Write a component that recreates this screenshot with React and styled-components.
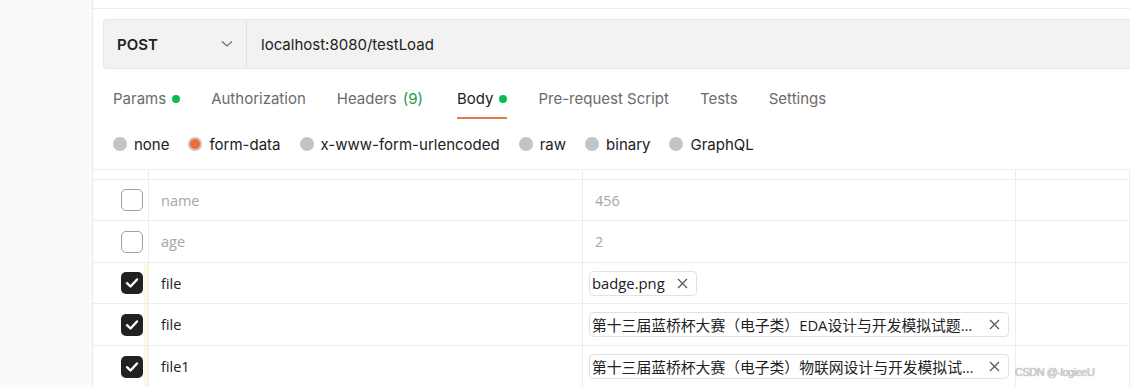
import React from "react";
import styled, { createGlobalStyle } from "styled-components";

const GlobalStyle = createGlobalStyle`
	html, body {
		margin: 0;
		padding: 0;
		background: #ffffff;
		overflow: hidden;
	}
	body {
		font-family: Inter, "Noto Sans CJK SC", sans-serif;
		color: #212121;
	}
`;

const Page = styled.div`
	display: flex;
	width: 1130px;
	height: 387px;
	overflow: hidden;
	position: relative;
`;

const Sidebar = styled.div`
	width: 92px;
	flex-shrink: 0;
	background: #fafafa;
	border-right: 1px solid #ebebeb;
`;

const Main = styled.div`
	flex: 1;
	display: flex;
	flex-direction: column;
	min-width: 0;
`;

const TopStrip = styled.div`
	height: 8px;
	flex-shrink: 0;
	border-bottom: 1px solid #ededed;
`;

const UrlBar = styled.div`
	display: flex;
	flex-shrink: 0;
	height: 48px;
	margin: 10px -40px 0 10px;
	background: #f2f2f2;
	border: 1px solid #e6e6e6;
	border-radius: 4px;
`;

const Method = styled.div`
	width: 143px;
	display: flex;
	align-items: center;
	justify-content: space-between;
	padding: 0 13px 0 13px;
	box-sizing: border-box;
	border-right: 1px solid #e2e2e2;
	font-weight: 600;
	font-size: 15px;
	color: #212121;
`;

const UrlText = styled.div`
	display: flex;
	align-items: center;
	padding-left: 14px;
	font-size: 15px;
	color: #212121;
`;

const Tabs = styled.div`
	display: flex;
	flex-shrink: 0;
	gap: 31px;
	height: 50px;
	padding-left: 20px;
	box-sizing: border-box;
`;

const Tab = styled.div`
	display: flex;
	align-items: center;
	gap: 6px;
	font-size: 15px;
	color: ${p => (p.active ? "#212121" : "#6b6b6b")};
	border-bottom: 2px solid ${p => (p.active ? "#e4774c" : "transparent")};
	padding-top: 10px;
	margin-left: ${p => (p.active ? "3px" : "0")};
	box-sizing: border-box;
`;

const Count = styled.span`
	color: #1a9a4f;
`;

const Dot = styled.span`
	width: 8px;
	height: 8px;
	border-radius: 50%;
	background: #0cbb52;
	margin-top: 1px;
`;

const Radios = styled.div`
	display: flex;
	flex-shrink: 0;
	align-items: center;
	gap: 19px;
	height: 50px;
	padding-left: 20px;
	box-sizing: border-box;
`;

const RadioItem = styled.label`
	display: flex;
	align-items: center;
	gap: 7px;
	font-size: 15px;
	color: #212121;
`;

const RadioCircle = styled.span`
	width: 14px;
	height: 14px;
	border-radius: 50%;
	box-sizing: border-box;
	background: ${p => (p.checked ? "#f26b3a" : "#c4c4c4")};
	border: ${p => (p.checked ? "2px solid #c4c4c4" : "none")};
`;

const Table = styled.div`
	display: grid;
	grid-template-columns: 56px 434px 433px 1fr;
	border-top: 1px solid #ededed;
`;

const HeadCell = styled.div`
	height: 9px;
	border-bottom: 1px solid #ededed;
	border-right: 1px solid #ededed;
`;

const Cell = styled.div`
	height: ${p => p.h}px;
	display: flex;
	align-items: center;
	border-bottom: 1px solid #ededed;
	border-right: 1px solid #ededed;
	min-width: 0;
	font-family: "Open Sans", "Noto Sans CJK SC", sans-serif;
	font-size: 14.5px;
	color: ${p => (p.muted ? "#a6a6a6" : "#212121")};
	padding-left: ${p => (p.pad === undefined ? 12 : p.pad)}px;
`;

const CheckCell = styled(Cell)`
	justify-content: flex-end;
	padding: 0 5px 0 0;
	box-shadow: ${p => (p.on ? "inset -4px 0 0 #fdf9e4" : "none")};
`;

const Box = styled.span`
	width: 22px;
	height: 22px;
	border-radius: 5px;
	box-sizing: border-box;
	display: flex;
	align-items: center;
	justify-content: center;
	background: ${p => (p.on ? "#212121" : "#ffffff")};
	border: ${p => (p.on ? "none" : "1.5px solid #a0a0a0")};
`;

const Chip = styled.div`
	display: flex;
	align-items: center;
	gap: 12px;
	height: 25px;
	padding: 0 8px 0 2px;
	box-sizing: border-box;
	border: 1px solid #e2e2e2;
	border-radius: 4px;
	font-size: 14.8px;
	color: #212121;
	font-family: "Open Sans", "Noto Sans CJK SC", sans-serif;
	width: ${p => (p.full ? "420px" : "auto")};
`;

const ChipName = styled.span`
	flex: 1;
	white-space: nowrap;
	overflow: hidden;
	text-overflow: ellipsis;
	min-width: 0;
`;

const Watermark = styled.div`
	position: absolute;
	left: 1015px;
	bottom: 9px;
	font-family: "Liberation Sans", Arial, sans-serif;
	font-size: 11px;
	letter-spacing: -0.5px;
	color: #d4d4d4;
	text-shadow: 0 0 1px #8a8a8a;
`;

const Chevron = () => (
	<svg width="12" height="8" viewBox="0 0 12 8">
		<path d="M1 1.5 L6 6 L11 1.5" fill="none" stroke="#6b6b6b" strokeWidth="1.2" />
	</svg>
);

const Close = () => (
	<svg width="11" height="11" viewBox="0 0 11 11" style={{ flexShrink: 0 }}>
		<path d="M1 1 L10 10 M10 1 L1 10" stroke="#5a5a5a" strokeWidth="1.3" />
	</svg>
);

const Tick = () => (
	<svg width="14" height="12" viewBox="0 0 14 12">
		<path d="M2 6.2 L5.5 9.5 L12 2.5" fill="none" stroke="#fff" strokeWidth="2.4" strokeLinecap="round" strokeLinejoin="round" />
	</svg>
);

const rows = [
	{ key: "name", value: "456", on: false, h: 40 },
	{ key: "age", value: "2", on: false, h: 41 },
	{ key: "file", file: "badge.png", on: true, h: 40 },
	{ key: "file", file: "第十三届蓝桥杯大赛（电子类）EDA设计与开发模拟试题与答案.zip", on: true, full: true, h: 41 },
	{ key: "file1", file: "第十三届蓝桥杯大赛（电子类）物联网设计与开发模拟试题与答案.zip", on: true, full: true, h: 41 }
];

const tabs = [
	{ label: "Params", dot: true },
	{ label: "Authorization" },
	{ label: "Headers", count: "(9)" },
	{ label: "Body", dot: true, active: true },
	{ label: "Pre-request Script" },
	{ label: "Tests" },
	{ label: "Settings" }
];

const bodyTypes = ["none", "form-data", "x-www-form-urlencoded", "raw", "binary", "GraphQL"];

const App = () => {
	return (
		<Page>
			<GlobalStyle />
			<Sidebar />
			<Main>
				<TopStrip />
				<UrlBar>
					<Method>
						POST
						<Chevron />
					</Method>
					<UrlText>localhost:8080/testLoad</UrlText>
				</UrlBar>
				<Tabs>
					{tabs.map(t => (
						<Tab key={t.label} active={t.active}>
							{t.label}
							{t.count && <Count>{t.count}</Count>}
							{t.dot && <Dot />}
						</Tab>
					))}
				</Tabs>
				<Radios>
					{bodyTypes.map(b => (
						<RadioItem key={b}>
							<RadioCircle checked={b === "form-data"} />
							{b}
						</RadioItem>
					))}
				</Radios>
				<Table>
					<HeadCell />
					<HeadCell />
					<HeadCell />
					<HeadCell />
					{rows.map((r, i) => (
						<React.Fragment key={i}>
							<CheckCell on={r.on} h={r.h}>
								<Box on={r.on}>{r.on && <Tick />}</Box>
							</CheckCell>
							<Cell muted={!r.on} h={r.h}>{r.key}</Cell>
							{r.file ? (
								<Cell pad={6} h={r.h}>
									<Chip full={r.full}>
										<ChipName>{r.file}</ChipName>
										<Close />
									</Chip>
								</Cell>
							) : (
								<Cell muted h={r.h}>{r.value}</Cell>
							)}
							<Cell h={r.h} />
						</React.Fragment>
					))}
				</Table>
			</Main>
			<Watermark>CSDN @-logieeU</Watermark>
		</Page>
	);
};

export default App;
